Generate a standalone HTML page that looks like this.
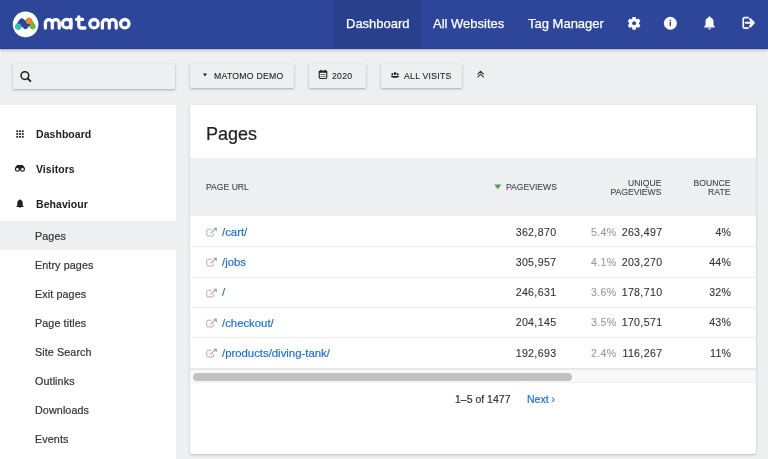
<!DOCTYPE html>
<html><head><meta charset="utf-8">
<style>
*{margin:0;padding:0;box-sizing:border-box}
html,body{width:768px;height:459px;overflow:hidden;background:#eeeff1;font-family:"Liberation Sans",sans-serif;color:#212121}
.abs{position:absolute}
.si,.bt,.th,.c,.t{-webkit-text-stroke:.2px currentColor}
.bt{-webkit-text-stroke:.1px currentColor}
.nav,.si,.bt,.th,.c,.t{will-change:transform}
.num,.pct,.th{-webkit-text-stroke:.1px currentColor}
.sb{-webkit-text-stroke:0}
.t{position:absolute;white-space:nowrap;line-height:1}
#hdr{position:absolute;left:0;top:0;width:768px;height:49px;background:#2e4699;border-bottom:1px solid #243b93;box-shadow:0 1px 3px rgba(0,0,0,.3)}
.nav{position:absolute;top:0;height:48px;line-height:48px;-webkit-text-stroke:.25px #fff;color:#fff;font-size:13px;white-space:nowrap}
#active{position:absolute;left:333px;top:0;width:88px;height:48px;background:#29408d}
.btn{position:absolute;top:64px;height:24px;background:#eeeff1;box-shadow:0 1px 2.5px rgba(0,0,0,.3);border-radius:2px}
.bt{position:absolute;font-size:8.7px;color:#1e1e1e;letter-spacing:.25px;white-space:nowrap;line-height:1}
#side{position:absolute;left:0;top:105px;width:176px;height:354px;background:#fff}
.si{position:absolute;left:35.3px;font-size:10.5px;color:#333;letter-spacing:.1px;white-space:nowrap;line-height:1}
.sb{font-weight:bold;color:#212121;letter-spacing:.05px;left:35.8px}
#card{position:absolute;left:190px;top:105px;width:566px;height:349px;background:#fff;border-radius:1px 1px 2px 2px;box-shadow:0 1px 2.5px rgba(0,0,0,.22)}
.th{position:absolute;font-size:8.6px;color:#41464b;letter-spacing:0;line-height:8.5px;white-space:nowrap}
.rb{position:absolute;left:0;width:566px;height:1px;background:#eeeeee}
.c{position:absolute;font-size:11px;color:#333;white-space:nowrap;line-height:1}
.url{color:#1f6fcb;font-size:11.35px}
.pct{color:#9a9a9a}
.num{text-align:right;font-size:10.6px;letter-spacing:.35px}
.pct{font-size:10.6px;letter-spacing:.3px}
</style></head><body>
<div id="hdr">
  <div id="active"></div>
  <svg class="abs" style="left:0;top:0" width="140" height="48" viewBox="0 0 140 48">
    <circle cx="25.6" cy="24.4" r="12.8" fill="#fff"/>
    <path d="M29 21 L32.6 26.4" stroke="#6cb939" stroke-width="6" fill="none" stroke-linecap="round"/>
    <path d="M18.3 26.6 L21.9 21.4 L25.4 26 L29 21" stroke="#2e4699" stroke-width="6" fill="none" stroke-linecap="round" stroke-linejoin="round"/>
    <circle cx="18.3" cy="26.6" r="3.1" fill="#35bfc0"/>
    <circle cx="29" cy="20.9" r="3.1" fill="#f38334"/>
    <g stroke="#fff" stroke-width="3.3" fill="none" stroke-linecap="round" stroke-linejoin="round">
      <path d="M45.4 28 V23 A3.45 3.45 0 0 1 52.3 23 V28 M52.3 23 A3.45 3.45 0 0 1 59.2 23 V28"/>
      <circle cx="66.7" cy="23.7" r="4.25"/>
      <path d="M70.95 19.5 V28"/>
      <path d="M78.8 16.9 V25.5 Q78.8 28 81.5 28 H85 M76.6 19.4 H82.6"/>
      <circle cx="94" cy="23.7" r="4.2"/>
      <path d="M102.4 28 V23 A3.45 3.45 0 0 1 109.3 23 V28 M109.3 23 A3.45 3.45 0 0 1 116.2 23 V28"/>
      <circle cx="124.8" cy="23.7" r="4.2"/>
    </g>
  </svg>
  <div class="nav" style="left:346px">Dashboard</div>
  <div class="nav" style="left:433px">All Websites</div>
  <div class="nav" style="left:528px">Tag Manager</div>
  <!-- gear -->
  <svg class="abs" style="left:624px;top:13px" width="20" height="20" viewBox="0 0 20 20"><g fill="#fff" transform="translate(10.1 10.3)"><circle r="4.9"/><rect x="-1.8" y="-6.4" width="3.6" height="12.8" rx=".6"/><rect x="-1.8" y="-6.4" width="3.6" height="12.8" rx=".6" transform="rotate(60)"/><rect x="-1.8" y="-6.4" width="3.6" height="12.8" rx=".6" transform="rotate(120)"/></g><circle cx="10.1" cy="10.3" r="2" fill="#2e4699"/></svg>
  <!-- info -->
  <svg class="abs" style="left:663px;top:16px" width="15" height="15" viewBox="0 0 15 15"><circle cx="7.35" cy="7.25" r="6.5" fill="#fff"/><rect x="6.65" y="5.85" width="1.4" height="4.3" rx=".5" fill="#2e4699"/><circle cx="7.35" cy="4.35" r=".85" fill="#2e4699"/></svg>
  <!-- bell -->
  <svg class="abs" style="left:704px;top:16px" width="11" height="14" viewBox="0 0 11 14"><path fill="#fff" d="M5.5 0.3c.5 0 .9.4.9.9v.4c1.9.4 3.1 2 3.1 4v3.5l1.3 1.7v.6H0.2v-.6l1.3-1.7V5.6c0-2 1.2-3.6 3.1-4v-.4c0-.5.4-.9.9-.9z"/><path fill="#fff" d="M4 12.2h3a1.5 1.2 0 0 1-3 0z"/></svg>
  <!-- signout -->
  <svg class="abs" style="left:738px;top:13px" width="22" height="20" viewBox="0 0 22 20"><path d="M10.7 4.55H6.6Q5.25 4.55 5.25 5.9V13.7Q5.25 15.05 6.6 15.05H10.7" stroke="#fff" stroke-width="1.7" fill="none"/><path d="M7.8 9.8H14.5" stroke="#fff" stroke-width="2.1" stroke-linecap="round"/><path d="M12.2 6.2L15.6 9.8L12.2 13.4" stroke="#fff" stroke-width="2.4" fill="none" stroke-linecap="round" stroke-linejoin="round"/><path d="M12.2 7L15 9.8L12.2 12.6Z" fill="#fff"/></svg>
</div>

<div class="btn" style="left:13px;width:162px;height:25px;border-radius:1px"></div>
<svg class="abs" style="left:19px;top:70px" width="14" height="14" viewBox="0 0 14 14"><circle cx="5.9" cy="5.6" r="3.85" stroke="#212121" stroke-width="1.5" fill="none"/><path d="M8.6 8.4L11.4 11.2" stroke="#212121" stroke-width="1.9" stroke-linecap="round"/></svg>

<div class="btn" style="left:190px;width:104px"></div>
<svg class="abs" style="left:203px;top:73px" width="4" height="4" viewBox="0 0 4 4"><path d="M0 0.4H4L2 3.6Z" fill="#212121"/></svg>
<div class="bt" style="left:214px;top:72.4px">MATOMO DEMO</div>

<div class="btn" style="left:309px;width:57px"></div>
<svg class="abs" style="left:318px;top:69px" width="10" height="11" viewBox="0 0 10 11"><rect x="1.25" y="2.35" width="7.5" height="7.1" rx="1.1" stroke="#212121" stroke-width="1.1" fill="none"/><rect x="0.7" y="1.8" width="8.6" height="1.9" rx=".8" fill="#212121"/><rect x="2.1" y="0.9" width="1.3" height="1.5" fill="#212121"/><rect x="6.6" y="0.9" width="1.3" height="1.5" fill="#212121"/><rect x="2.6" y="5" width="1" height="1" fill="#333"/><rect x="4.2" y="5.1" width="3.2" height=".8" fill="#555"/><rect x="2.6" y="7" width="1" height="1" fill="#333"/><rect x="4.2" y="7.1" width="3.2" height=".8" fill="#555"/></svg>
<div class="bt" style="left:332px;top:72.4px">2020</div>

<div class="btn" style="left:381px;width:81px"></div>
<svg class="abs" style="left:390px;top:71px" width="10" height="8" viewBox="0 0 10 8"><ellipse cx="5" cy="2.5" rx="1.25" ry="1.6" fill="#212121"/><ellipse cx="2.3" cy="3.3" rx=".85" ry="1.25" fill="#212121"/><ellipse cx="7.7" cy="3.3" rx=".85" ry="1.25" fill="#212121"/><path d="M0.8 4.9H9.2Q9.2 6.7 5 6.7Q0.8 6.7 0.8 4.9Z" fill="#212121"/></svg>
<div class="bt" style="left:404px;top:72.4px">ALL VISITS</div>

<svg class="abs" style="left:476px;top:70px" width="10" height="9" viewBox="0 0 10 9"><path d="M1.5 4.3L4.6 1.3L7.7 4.3M1.5 7.3L4.6 4.2L7.7 7.3" stroke="#333" stroke-width="1.15" fill="none"/></svg>

<div id="side">
  <svg class="abs" style="left:16px;top:25px" width="8" height="8" viewBox="0 0 8 8"><g fill="#212121"><rect x="0.3" y="0.3" width="1.8" height="1.8"/><rect x="3.1" y="0.3" width="1.8" height="1.8"/><rect x="5.9" y="0.3" width="1.8" height="1.8"/><rect x="0.3" y="3.1" width="1.8" height="1.8"/><rect x="3.1" y="3.1" width="1.8" height="1.8"/><rect x="5.9" y="3.1" width="1.8" height="1.8"/><rect x="0.3" y="5.9" width="1.8" height="1.8"/><rect x="3.1" y="5.9" width="1.8" height="1.8"/><rect x="5.9" y="5.9" width="1.8" height="1.8"/></g></svg>
    <svg class="abs" style="left:14px;top:58px" width="12" height="10" viewBox="0 0 12 10"><path d="M1 6.2Q1.2 3.2 3.2 1.9Q4.4 1.2 5.1 2.3H6.7Q7.4 1.2 8.6 1.9Q10.6 3.2 10.8 6.2Z" fill="#212121"/><rect x="4.9" y="2.2" width="2" height="4.6" fill="#212121"/><circle cx="3.35" cy="6.3" r="1.95" fill="#fff" stroke="#212121" stroke-width="1.15"/><circle cx="8.45" cy="6.3" r="1.95" fill="#fff" stroke="#212121" stroke-width="1.15"/></svg>
  <svg class="abs" style="left:16px;top:94px" width="8" height="9" viewBox="0 0 8 9"><path fill="#212121" d="M4 0.2c.4 0 .6.3.6.6v.3c1.3.3 2.1 1.4 2.1 2.7v2.4l.9 1.2v.5H0.4v-.5l.9-1.2V3.8c0-1.3.8-2.4 2.1-2.7V.8c0-.3.2-.6.6-.6z"/><path fill="#212121" d="M3 8.3h2a1 .7 0 0 1-2 0z"/></svg>
  <div class="abs" style="left:0;top:116px;width:176px;height:29px;background:#eeeff1"></div>
</div>
<div class="si sb" style="top:129.3px">Dashboard</div>
<div class="si sb" style="top:163.8px">Visitors</div>
<div class="si sb" style="top:199.1px">Behaviour</div>
<div class="si" style="top:230.8px;font-size:10.75px">Pages</div>
<div class="si" style="top:259.8px;font-size:10.75px">Entry pages</div>
<div class="si" style="top:288.8px;font-size:10.75px">Exit pages</div>
<div class="si" style="top:317.8px;font-size:10.75px">Page titles</div>
<div class="si" style="top:346.8px;font-size:10.75px">Site Search</div>
<div class="si" style="top:375.8px;font-size:10.75px">Outlinks</div>
<div class="si" style="top:404.8px;font-size:10.75px">Downloads</div>
<div class="si" style="top:433.8px;font-size:10.75px">Events</div>

<div id="card">
  <div class="t" style="left:206px;top:124.8px;font-size:18px;color:#212121;position:fixed">Pages</div>
  <div class="abs" style="left:0;top:53px;width:566px;height:58px;background:#eeeff1"></div>
</div>
<div class="th" style="left:206px;top:183px">PAGE URL</div>
<svg class="abs" style="left:494px;top:183.5px" width="8" height="6" viewBox="0 0 8 6"><path d="M0.3 0.5H7.3L3.8 5.3Z" fill="#4aa043"/></svg>
<div class="th" style="left:506px;top:183px">PAGEVIEWS</div>
<div class="th" style="left:561px;width:100.4px;top:179px;text-align:right">UNIQUE<br>PAGEVIEWS</div>
<div class="th" style="left:630.3px;width:100.4px;top:179px;text-align:right">BOUNCE<br>RATE</div>

<div class="rb" style="left:190px;top:246px"></div>
<div class="rb" style="left:190px;top:276.5px"></div>
<div class="rb" style="left:190px;top:307px"></div>
<div class="rb" style="left:190px;top:337.2px"></div>
<div class="rb" style="left:190px;top:368px;height:1.5px;background:#e8e8e8"></div>
<div class="abs" style="left:190px;top:369.5px;width:566px;height:13px;background:#f8f8f8;border-bottom:1px solid #f0f0f0"></div>
<div class="abs" style="left:193px;top:373px;width:379px;height:7.5px;border-radius:4px;background:#c1c1c1"></div>

<svg class="abs" style="left:205px;top:226.9px" width="13" height="11" viewBox="0 0 13 11"><path d="M6.6 2.25H2.75Q1.75 2.25 1.75 3.25V7.95Q1.75 8.95 2.75 8.95H7.55Q8.55 8.95 8.55 7.95V6.2" stroke="#ababab" stroke-width=".95" fill="none"/><path d="M5.5 6.3L10.3 1.9" stroke="#a3a3a3" stroke-width="1.1"/><path d="M8.1 .7H11.9V4.5Z" fill="#a3a3a3"/></svg>
<div class="c url" style="left:221.5px;top:226.89px">/cart/</div>
<div class="c num" style="left:456px;width:100.4px;top:226.59px">362,870</div>
<div class="c pct" style="left:591px;top:226.59px">5.4%</div>
<div class="c num" style="left:562px;width:100.4px;top:226.59px">263,497</div>
<div class="c num" style="left:631px;width:100.4px;top:226.59px">4%</div>
<svg class="abs" style="left:205px;top:257.2px" width="13" height="11" viewBox="0 0 13 11"><path d="M6.6 2.25H2.75Q1.75 2.25 1.75 3.25V7.95Q1.75 8.95 2.75 8.95H7.55Q8.55 8.95 8.55 7.95V6.2" stroke="#ababab" stroke-width=".95" fill="none"/><path d="M5.5 6.3L10.3 1.9" stroke="#a3a3a3" stroke-width="1.1"/><path d="M8.1 .7H11.9V4.5Z" fill="#a3a3a3"/></svg>
<div class="c url" style="left:221.5px;top:257.19px">/jobs</div>
<div class="c num" style="left:456px;width:100.4px;top:256.89px">305,957</div>
<div class="c pct" style="left:591px;top:256.89px">4.1%</div>
<div class="c num" style="left:562px;width:100.4px;top:256.89px">203,270</div>
<div class="c num" style="left:631px;width:100.4px;top:256.89px">44%</div>
<svg class="abs" style="left:205px;top:287.5px" width="13" height="11" viewBox="0 0 13 11"><path d="M6.6 2.25H2.75Q1.75 2.25 1.75 3.25V7.95Q1.75 8.95 2.75 8.95H7.55Q8.55 8.95 8.55 7.95V6.2" stroke="#ababab" stroke-width=".95" fill="none"/><path d="M5.5 6.3L10.3 1.9" stroke="#a3a3a3" stroke-width="1.1"/><path d="M8.1 .7H11.9V4.5Z" fill="#a3a3a3"/></svg>
<div class="c url" style="left:221.5px;top:287.49px">/</div>
<div class="c num" style="left:456px;width:100.4px;top:287.19px">246,631</div>
<div class="c pct" style="left:591px;top:287.19px">3.6%</div>
<div class="c num" style="left:562px;width:100.4px;top:287.19px">178,710</div>
<div class="c num" style="left:631px;width:100.4px;top:287.19px">32%</div>
<svg class="abs" style="left:205px;top:317.8px" width="13" height="11" viewBox="0 0 13 11"><path d="M6.6 2.25H2.75Q1.75 2.25 1.75 3.25V7.95Q1.75 8.95 2.75 8.95H7.55Q8.55 8.95 8.55 7.95V6.2" stroke="#ababab" stroke-width=".95" fill="none"/><path d="M5.5 6.3L10.3 1.9" stroke="#a3a3a3" stroke-width="1.1"/><path d="M8.1 .7H11.9V4.5Z" fill="#a3a3a3"/></svg>
<div class="c url" style="left:221.5px;top:317.79px">/checkout/</div>
<div class="c num" style="left:456px;width:100.4px;top:317.49px">204,145</div>
<div class="c pct" style="left:591px;top:317.49px">3.5%</div>
<div class="c num" style="left:562px;width:100.4px;top:317.49px">170,571</div>
<div class="c num" style="left:631px;width:100.4px;top:317.49px">43%</div>
<svg class="abs" style="left:205px;top:348.1px" width="13" height="11" viewBox="0 0 13 11"><path d="M6.6 2.25H2.75Q1.75 2.25 1.75 3.25V7.95Q1.75 8.95 2.75 8.95H7.55Q8.55 8.95 8.55 7.95V6.2" stroke="#ababab" stroke-width=".95" fill="none"/><path d="M5.5 6.3L10.3 1.9" stroke="#a3a3a3" stroke-width="1.1"/><path d="M8.1 .7H11.9V4.5Z" fill="#a3a3a3"/></svg>
<div class="c url" style="left:221.5px;top:348.09px">/products/diving-tank/</div>
<div class="c num" style="left:456px;width:100.4px;top:347.79px">192,693</div>
<div class="c pct" style="left:591px;top:347.79px">2.4%</div>
<div class="c num" style="left:562px;width:100.4px;top:347.79px">116,267</div>
<div class="c num" style="left:631px;width:100.4px;top:347.79px">11%</div>
<div class="c" style="left:455px;top:394.4px;font-size:10.5px">1–5 of 1477</div>
<div class="c url" style="left:527px;top:394.4px;font-size:10.5px">Next ›</div>
</body></html>
